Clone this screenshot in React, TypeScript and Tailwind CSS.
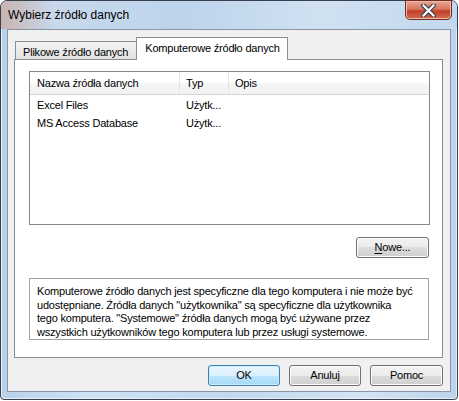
import React from 'react';

const btn =
  "h-[21px] rounded-[3px] border border-[#707070] bg-[linear-gradient(#f2f2f2_0%,#ebebeb_50%,#dddddd_50%,#cfcfcf_100%)] shadow-[inset_0_0_0_1px_#fcfcfc] text-[11px] tracking-[-0.2px] leading-none text-black";

export default function App() {
  const rows = [
    { name: 'Excel Files', type: 'Użytk...' },
    { name: 'MS Access Database', type: 'Użytk...' },
  ];

  return (
    <div className="w-[459px] h-[401px] bg-white font-['Liberation_Sans',Arial,sans-serif] text-black select-none whitespace-nowrap">
      {/* Window frame */}
      <div className="w-[458px] h-[400px] flex flex-col rounded-t-[7px] rounded-b-[4px] border border-[#37404c] bg-[linear-gradient(90deg,#b9d1ea_0%,#cfe2f5_20%,#c2d8ef_50%,#d3e4f4_80%,#bcd3ea_100%)] shadow-[inset_0_0_0_1px_#e6f0fa]">
        {/* Title bar */}
        <div className="relative h-[28px] shrink-0 bg-[linear-gradient(90deg,#c9b4b0_0%,#c7d9ec_12%,#bdd4ec_40%,#d0e1f2_70%,#c3d8ee_100%)] rounded-t-[6px]">
          <span className="absolute left-[7px] top-[7px] text-[12px] leading-[15px]">Wybierz źródło danych</span>
          <div className="absolute right-[5px] top-[-1px] w-[47px] h-[20px] rounded-b-[5px] border border-[#6d2f25] bg-[linear-gradient(#e8a595_0%,#d9755f_45%,#c0402a_55%,#d46a4e_100%)] shadow-[inset_0_0_0_1px_#f1b9aa] flex items-center justify-center">
            <svg width="15" height="13" viewBox="0 0 15 13">
              <path d="M2.5 1.5 L12.5 11.5 M12.5 1.5 L2.5 11.5" stroke="#3b3f4a" strokeWidth="4.5" strokeLinecap="square" />
              <path d="M2.5 1.5 L12.5 11.5 M12.5 1.5 L2.5 11.5" stroke="#ffffff" strokeWidth="2.2" strokeLinecap="square" />
            </svg>
          </div>
        </div>

        {/* Client area */}
        <div className="flex-1 mx-[6px] mb-[7px] border border-[#8795a6] bg-[#f0f0f0] flex flex-col text-[11px] tracking-[-0.2px]">
          {/* Tabs */}
          <div className="flex items-end h-[29px] pl-[7px] pt-[7px]">
            <div className="h-[18px] pl-[7px] pr-[8px] -mr-[1px] border border-b-0 border-[#898c95] bg-[linear-gradient(#f2f2f2,#e3e3e3)] leading-[18px] pt-[1px]">
              Plikowe źródło danych
            </div>
            <div className="relative z-10 h-[23px] -mb-[1px] pl-[8px] pr-[7px] border border-b-0 border-[#898c95] bg-white leading-[20px]">
              Komputerowe źródło danych
            </div>
          </div>

          {/* Tab panel */}
          <div className="ml-[6px] mr-[7px] h-[299px] border border-[#898c95] bg-white flex flex-col pl-[14px] pr-[12px] pt-[11px]">
            {/* List view */}
            <div className="h-[154px] border border-[#828790] bg-white">
              <div className="flex h-[23px] border-b border-[#d5d5d5] bg-[linear-gradient(#ffffff_0%,#ffffff_50%,#f5f6f7_51%,#f1f2f4_100%)]">
                <div className="w-[150px] pl-[7px] leading-[23px] border-r border-[#e5e5e5]">Nazwa źródła danych</div>
                <div className="w-[49px] pl-[6px] leading-[23px] border-r border-[#e5e5e5]">Typ</div>
                <div className="flex-1 pl-[6px] leading-[23px]">Opis</div>
              </div>
              <div className="pt-[1px]">
                {rows.map((r) => (
                  <div key={r.name} className="flex h-[18px] leading-[18px]">
                    <div className="w-[150px] pl-[7px]">{r.name}</div>
                    <div className="w-[49px] pl-[6px]">{r.type}</div>
                  </div>
                ))}
              </div>
            </div>

            <div className="flex justify-end mt-[12px] pr-[1px]">
              <button className={`${btn} w-[73px]`}>
                <span className="underline underline-offset-2">N</span>owe...
              </button>
            </div>

            {/* Description */}
            <div className="mt-[20px] mr-[1px] h-[62px] border border-[#a0a0a0] pl-[7px] pt-[6px] leading-[13.5px]">
              Komputerowe źródło danych jest specyficzne dla tego komputera i nie może być
              <br />
              udostępniane. Źródła danych "użytkownika" są specyficzne dla użytkownika
              <br />
              tego komputera. "Systemowe" źródła danych mogą być używane przez
              <br />
              wszystkich użytkowników tego komputera lub przez usługi systemowe.
            </div>
          </div>

          {/* Dialog buttons */}
          <div className="flex justify-end gap-[9px] mt-[7px] mr-[7px]">
            <button className="w-[72px] h-[21px] rounded-[3px] border border-[#3c7fb1] bg-[linear-gradient(#eaf6fd_0%,#d9f0fc_50%,#bee6fd_50%,#a7d9f5_100%)] shadow-[inset_0_0_0_1px_#cdeefe] leading-none">
              OK
            </button>
            <button className={`${btn} w-[72px]`}>Anuluj</button>
            <button className={`${btn} w-[73px]`}>Pomoc</button>
          </div>
        </div>
      </div>
    </div>
  );
}
